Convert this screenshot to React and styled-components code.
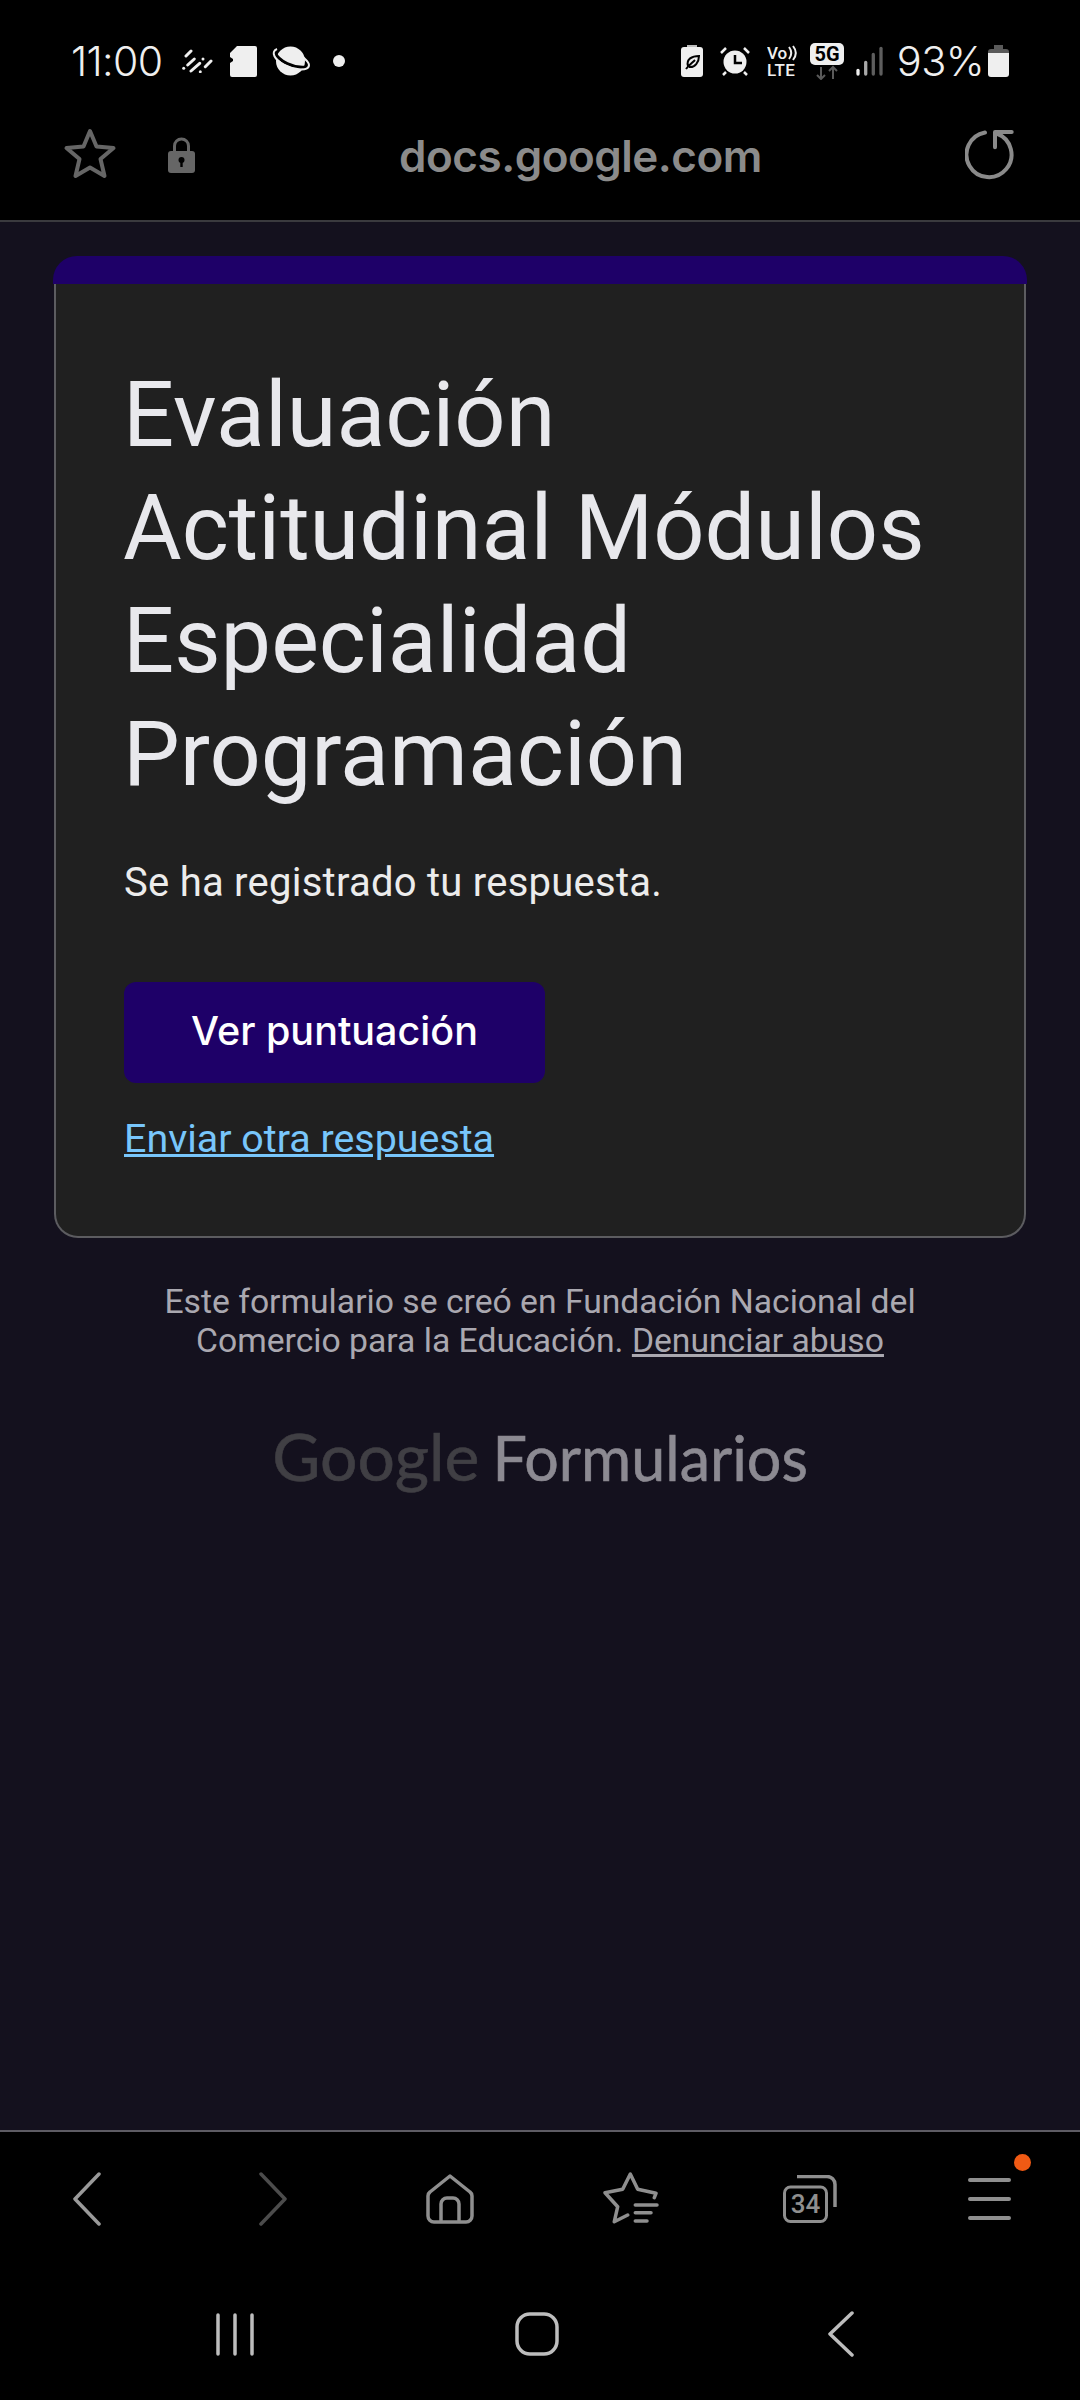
import React from "react";
import styled, { createGlobalStyle } from "styled-components";

const GlobalStyle = createGlobalStyle`
  html, body {
    margin: 0;
    padding: 0;
    background: #000;
  }
  * {
    box-sizing: border-box;
  }
`;

const Page = styled.div`
  width: 1080px;
  height: 2400px;
  display: flex;
  flex-direction: column;
  background: #14111e;
  font-family: Roboto, "Liberation Sans", sans-serif;
`;

const StatusBar = styled.div`
  height: 100px;
  padding: 0 71px 0 71px;
  background: #000;
  display: flex;
  align-items: center;
  justify-content: space-between;
  color: #efefef;
`;

const StatusGroup = styled.div`
  display: flex;
  align-items: center;
  padding-top: 22px;
`;

const StatusText = styled.span`
  font-family: Inter, Roboto, sans-serif;
  font-weight: 300;
  font-size: ${({ $size }) => $size || 41}px;
  line-height: 40px;
  letter-spacing: -0.6px;
  margin-left: ${({ $ml }) => $ml || 0}px;
`;

const StatusIcon = styled.svg`
  display: block;
  flex: none;
  margin-left: ${({ $ml }) => $ml || 0}px;
`;

const UrlBar = styled.div`
  height: 122px;
  padding: 0 65px 10px 63px;
  background: #000;
  border-bottom: 2px solid #3a3a3e;
  display: flex;
  align-items: center;
`;

const UrlIcon = styled.svg`
  display: block;
  flex: none;
  margin-left: ${({ $ml }) => $ml || 0}px;
`;

const UrlText = styled.div`
  flex: 1;
  text-align: center;
  font-family: Inter, Roboto, sans-serif;
  font-weight: 600;
  font-size: 44px;
  letter-spacing: -0.5px;
  color: #8b8b8b;
  padding: 2px 0 0 1px;
`;

const Main = styled.main`
  flex: 1;
  padding: 34px 54px 0 54px;
  display: flex;
  flex-direction: column;
`;

const CardTop = styled.div`
  height: 28px;
  margin: 0 -1px;
  background: #1e0068;
  border-radius: 24px 24px 0 0;
`;

const Card = styled.section`
  height: 954px;
  padding: 75px 68px 0 68px;
  background: #202020;
  border: 2px solid #5c5c60;
  border-top: none;
  border-radius: 0 0 24px 24px;
`;

const Title = styled.h1`
  margin: 0 0 0 -1px;
  font-weight: 400;
  font-size: 90px;
  line-height: 113px;
  color: #e8e8ec;
`;

const Note = styled.p`
  margin: 47px 0 0;
  font-size: 40px;
  line-height: 50px;
  letter-spacing: 0.25px;
  color: #ececec;
`;

const ScoreButton = styled.button`
  display: block;
  width: 421px;
  height: 101px;
  margin: 74px 0 0;
  padding: 0 0 3px;
  border: none;
  border-radius: 12px;
  background: #1e0068;
  color: #fff;
  font-family: Inter, Lato, sans-serif;
  font-weight: 500;
  font-size: 39.5px;
`;

const AgainLink = styled.a`
  display: inline-block;
  margin-top: 31px;
  font-size: 39.4px;
  line-height: 50px;
  color: #78c6fb;
  text-decoration: underline;
`;

const Footer = styled.div`
  margin-top: 45px;
  text-align: center;
  font-size: 33.7px;
  line-height: 38.5px;
  color: #aaa8b0;
`;

const AbuseLink = styled.a`
  color: inherit;
  text-decoration: underline;
`;

const Brand = styled.div`
  margin-top: 60px;
  display: flex;
  justify-content: center;
  align-items: baseline;
  font-family: Lato, Inter, sans-serif;
  line-height: 72px;
  -webkit-text-stroke: 0.6px currentColor;
`;

const BrandWord = styled.span`
  color: ${({ $dim }) => ($dim ? "#403f44" : "#8c8a92")};
  font-size: ${({ $dim }) => ($dim ? 66 : 61)}px;
  margin-right: ${({ $dim }) => ($dim ? 13 : 0)}px;
`;

const BottomBar = styled.div`
  height: 142px;
  padding: 0 0 6px 73px;
  background: #000;
  border-top: 2px solid #5e5c64;
  display: flex;
  align-items: center;
`;

const ToolIcon = styled.svg`
  display: block;
  flex: none;
  margin-left: ${({ $ml }) => $ml || 0}px;
`;

const MenuWrap = styled.div`
  position: relative;
  margin-left: ${({ $ml }) => $ml || 0}px;
`;

const MenuDot = styled.span`
  position: absolute;
  top: -24px;
  right: -20px;
  width: 17px;
  height: 17px;
  border-radius: 50%;
  background: #f05a14;
`;

const NavBar = styled.div`
  height: 128px;
  padding: 0 0 4px 216px;
  background: #000;
  display: flex;
  align-items: center;
`;

const Chart = ({ w, h, ml, children, as: Comp = ToolIcon }) => (
  <Comp width={w} height={h} viewBox={`0 0 ${w} ${h}`} $ml={ml} fill="none">
    {children}
  </Comp>
);

export default function App() {
  return (
    <Page>
      <GlobalStyle />
      <StatusBar>
        <StatusGroup>
          <StatusText>11:00</StatusText>
          {/* streaks */}
          <Chart as={StatusIcon} w={31} h={24} ml={19}>
            <g stroke="#efefef" strokeWidth="3" strokeLinecap="round">
              <path d="M9 2 L4 7" />
              <path d="M12.3 10 L5.7 16" />
              <path d="M17.7 14.3 L9 22" />
              <path d="M29 12 L23.3 17.7" />
              <path d="M21 10 L21 10" />
              <path d="M1.7 19.3 L1.7 19.3" />
              <path d="M18.3 22.7 L18.3 22.7" />
            </g>
          </Chart>
          {/* sd card */}
          <Chart as={StatusIcon} w={27} h={31} ml={17}>
            <path
              d="M7 0 H25 a2 2 0 0 1 2 2 V29 a2 2 0 0 1 -2 2 H2 a2 2 0 0 1 -2 -2 V17 L3 15 V13 L0 11 V7 Z"
              fill="#efefef"
            />
          </Chart>
          {/* planet */}
          <Chart as={StatusIcon} w={38} h={30} ml={15}>
            <circle cx="18.5" cy="15" r="14.5" fill="#efefef" />
            <path d="M3 6 C6 15 22 23 35 21" stroke="#000" strokeWidth="3" />
            <path
              d="M5 3 C-2 6 3 14 12 19 C22 24 37 26 37 19 C37 16 33 13 31 11"
              stroke="#efefef"
              strokeWidth="2"
            />
          </Chart>
          <Chart as={StatusIcon} w={12} h={12} ml={23}>
            <circle cx="6" cy="6" r="6" fill="#efefef" />
          </Chart>
        </StatusGroup>
        <StatusGroup>
          {/* battery saver */}
          <Chart as={StatusIcon} w={22} h={32}>
            <path d="M6 0 H16 V3 H6 Z" fill="#bdbdbd" />
            <path
              d="M3 2 H19 a3 3 0 0 1 3 3 V29 a3 3 0 0 1 -3 3 H3 a3 3 0 0 1 -3 -3 V5 a3 3 0 0 1 3 -3 Z"
              fill="#efefef"
            />
            <path
              d="M5 24 C8 20 11 18 14 15 M7 21 C5 14 11 11 18 11 C18 17 14 23 8 22"
              stroke="#000"
              strokeWidth="2"
            />
          </Chart>
          {/* alarm */}
          <Chart as={StatusIcon} w={30} h={30} ml={17}>
            <circle cx="15" cy="16" r="11.5" fill="#efefef" />
            <path d="M15 9 V17 H22" stroke="#000" strokeWidth="2.5" />
            <path
              d="M1 7 L6 2 M29 7 L24 2 M6 26 L3 29 M24 26 L27 29"
              stroke="#efefef"
              strokeWidth="2.5"
            />
          </Chart>
          {/* volte */}
          <Chart as={StatusIcon} w={32} h={40} ml={17}>
            <text
              x="0"
              y="18"
              fill="#efefef"
              fontFamily="Roboto, sans-serif"
              fontSize="17"
              fontWeight="500"
            >
              Vo
            </text>
            <path
              d="M22 6 C25 10 25 14 22 18 M26 5 C30 10 30 14 26 19"
              stroke="#efefef"
              strokeWidth="2"
            />
            <text
              x="0"
              y="35"
              fill="#efefef"
              fontFamily="Roboto, sans-serif"
              fontSize="17"
              fontWeight="500"
              letterSpacing="0.4"
            >
              LTE
            </text>
          </Chart>
          {/* 5g with arrows */}
          <Chart as={StatusIcon} w={34} h={37} ml={11}>
            <rect width="34" height="22" rx="5" fill="#efefef" />
            <text
              x="17"
              y="18"
              textAnchor="middle"
              fill="#000"
              fontFamily="Roboto, sans-serif"
              fontSize="20"
              fontWeight="700"
            >
              5G
            </text>
            <path d="M11 24 V36 M7 32 L11 36 L15 32" stroke="#5a5a5a" strokeWidth="2" />
            <path d="M23 36 V24 M19 28 L23 24 L27 28" stroke="#5a5a5a" strokeWidth="2" />
          </Chart>
          {/* signal */}
          <Chart as={StatusIcon} w={27} h={30} ml={12}>
            <path d="M2 24.5 V28" stroke="#efefef" strokeWidth="3.3" strokeLinecap="round" />
            <path d="M9.7 16.5 V28" stroke="#a8a8a8" strokeWidth="3.3" strokeLinecap="round" />
            <path d="M17.3 8.5 V28" stroke="#5e5e5e" strokeWidth="3.3" strokeLinecap="round" />
            <path d="M25 2.5 V28" stroke="#5e5e5e" strokeWidth="3.3" strokeLinecap="round" />
          </Chart>
          <StatusText $ml={14} $size={41.5}>93%</StatusText>
          {/* battery */}
          <Chart as={StatusIcon} w={21} h={32} ml={4}>
            <path d="M6 0 H15 V4 H6 Z" fill="#5a5a5a" />
            <path d="M3 4 H18 a3 3 0 0 1 3 3 V9 H0 V7 a3 3 0 0 1 3 -3 Z" fill="#5a5a5a" />
            <path d="M0 8 H21 V29 a3 3 0 0 1 -3 3 H3 a3 3 0 0 1 -3 -3 Z" fill="#efefef" />
          </Chart>
        </StatusGroup>
      </StatusBar>

      <UrlBar>
        <Chart as={UrlIcon} w={54} h={54}>
          <path
            d="M27 3 L33.5 18.5 L50.5 20 L37.5 31 L41.5 48 L27 39.5 L12.5 48 L16.5 31 L3.5 20 L20.5 18.5 Z"
            stroke="#666"
            strokeWidth="4"
            strokeLinejoin="round"
          />
        </Chart>
        <Chart as={UrlIcon} w={27} h={36} ml={51}>
          <path d="M6.5 15 V9 a7 7 0 0 1 14 0 V15" stroke="#666" strokeWidth="3" />
          <rect y="14" width="27" height="22" rx="3" fill="#666" />
          <circle cx="13.5" cy="23" r="3" fill="#000" />
          <rect x="12.3" y="24" width="2.4" height="6" fill="#000" />
        </Chart>
        <UrlText>docs.google.com</UrlText>
        <Chart as={UrlIcon} w={50} h={54}>
          <path
            d="M20 4.5 A22.5 22.5 0 1 0 31.7 5.5"
            stroke="#8a8a8a"
            strokeWidth="4"
            strokeLinecap="round"
          />
          <path
            d="M46.7 4 H30 V19.3"
            stroke="#8a8a8a"
            strokeWidth="4"
            strokeLinecap="round"
            strokeLinejoin="round"
          />
        </Chart>
      </UrlBar>

      <Main>
        <CardTop />
        <Card>
          <Title>
            Evaluación
            <br />
            Actitudinal Módulos
            <br />
            Especialidad
            <br />
            Programación
          </Title>
          <Note>Se ha registrado tu respuesta.</Note>
          <ScoreButton>Ver puntuación</ScoreButton>
          <AgainLink href="#">Enviar otra respuesta</AgainLink>
        </Card>
        <Footer>
          Este formulario se creó en Fundación Nacional del
          <br />
          Comercio para la Educación. <AbuseLink href="#">Denunciar abuso</AbuseLink>
        </Footer>
        <Brand>
          <BrandWord $dim>Google</BrandWord>
          <BrandWord>Formularios</BrandWord>
        </Brand>
      </Main>

      <BottomBar>
        <Chart w={28} h={54}>
          <path
            d="M26 2 L2 27 L26 52"
            stroke="#9a9a9a"
            strokeWidth="3.5"
            strokeLinecap="round"
            strokeLinejoin="round"
          />
        </Chart>
        <Chart w={28} h={54} ml={158}>
          <path
            d="M2 2 L26 27 L2 52"
            stroke="#4c4c4c"
            strokeWidth="3.5"
            strokeLinecap="round"
            strokeLinejoin="round"
          />
        </Chart>
        <Chart w={48} h={50} ml={139}>
          <path
            d="M24 2 L44 18 a5 5 0 0 1 2 4 V42 a6 6 0 0 1 -6 6 H8 a6 6 0 0 1 -6 -6 V22 a5 5 0 0 1 2 -4 Z"
            stroke="#8f8f8f"
            strokeWidth="3.5"
            strokeLinejoin="round"
          />
          <path
            d="M15 48 V30 a6 6 0 0 1 6 -6 H27 a6 6 0 0 1 6 6 V48"
            stroke="#8f8f8f"
            strokeWidth="3.5"
          />
        </Chart>
        <Chart w={57} h={54} ml={128}>
          <path
            d="M52.3 25.7 L54 21.3 L35.7 17.3 L28.3 2 L20.7 17.3 L3 20.7 L15.7 34.7 L12.3 49.7 L25.7 43"
            stroke="#8f8f8f"
            strokeWidth="3.5"
            strokeLinecap="round"
            strokeLinejoin="round"
          />
          <path
            d="M33.3 33 H55 M33.3 40.7 H49 M33.3 49 H45"
            stroke="#8f8f8f"
            strokeWidth="3.5"
            strokeLinecap="round"
          />
        </Chart>
        <Chart w={54} h={48} ml={124}>
          <rect x="1.5" y="12" width="42" height="34.5" rx="6" stroke="#8f8f8f" strokeWidth="3" />
          <path d="M14 1.5 H44 a8 8 0 0 1 8 8 V32" stroke="#8f8f8f" strokeWidth="3.5" />
          <text
            x="22.5"
            y="38"
            textAnchor="middle"
            fill="#8f8f8f"
            fontFamily="Roboto, sans-serif"
            fontSize="26"
            fontWeight="500"
          >
            34
          </text>
        </Chart>
        <MenuWrap $ml={131}>
          <Chart w={43} h={42}>
            <path
              d="M2 2 H41 M2 21 H41 M2 40 H41"
              stroke="#8f8f8f"
              strokeWidth="4"
              strokeLinecap="round"
            />
          </Chart>
          <MenuDot />
        </MenuWrap>
      </BottomBar>

      <NavBar>
        <Chart w={38} h={43}>
          <path
            d="M2 2 V41 M19 2 V41 M36 2 V41"
            stroke="#bdbdbd"
            strokeWidth="3.5"
            strokeLinecap="round"
          />
        </Chart>
        <Chart w={60} h={44} ml={249}>
          <rect x="14" y="2" width="40" height="40" rx="13" stroke="#bdbdbd" strokeWidth="3.5" />
        </Chart>
        <Chart w={27} h={46} ml={264}>
          <path
            d="M25 2 L3 23 L25 44"
            stroke="#bdbdbd"
            strokeWidth="3.5"
            strokeLinecap="round"
            strokeLinejoin="round"
          />
        </Chart>
      </NavBar>
    </Page>
  );
}
